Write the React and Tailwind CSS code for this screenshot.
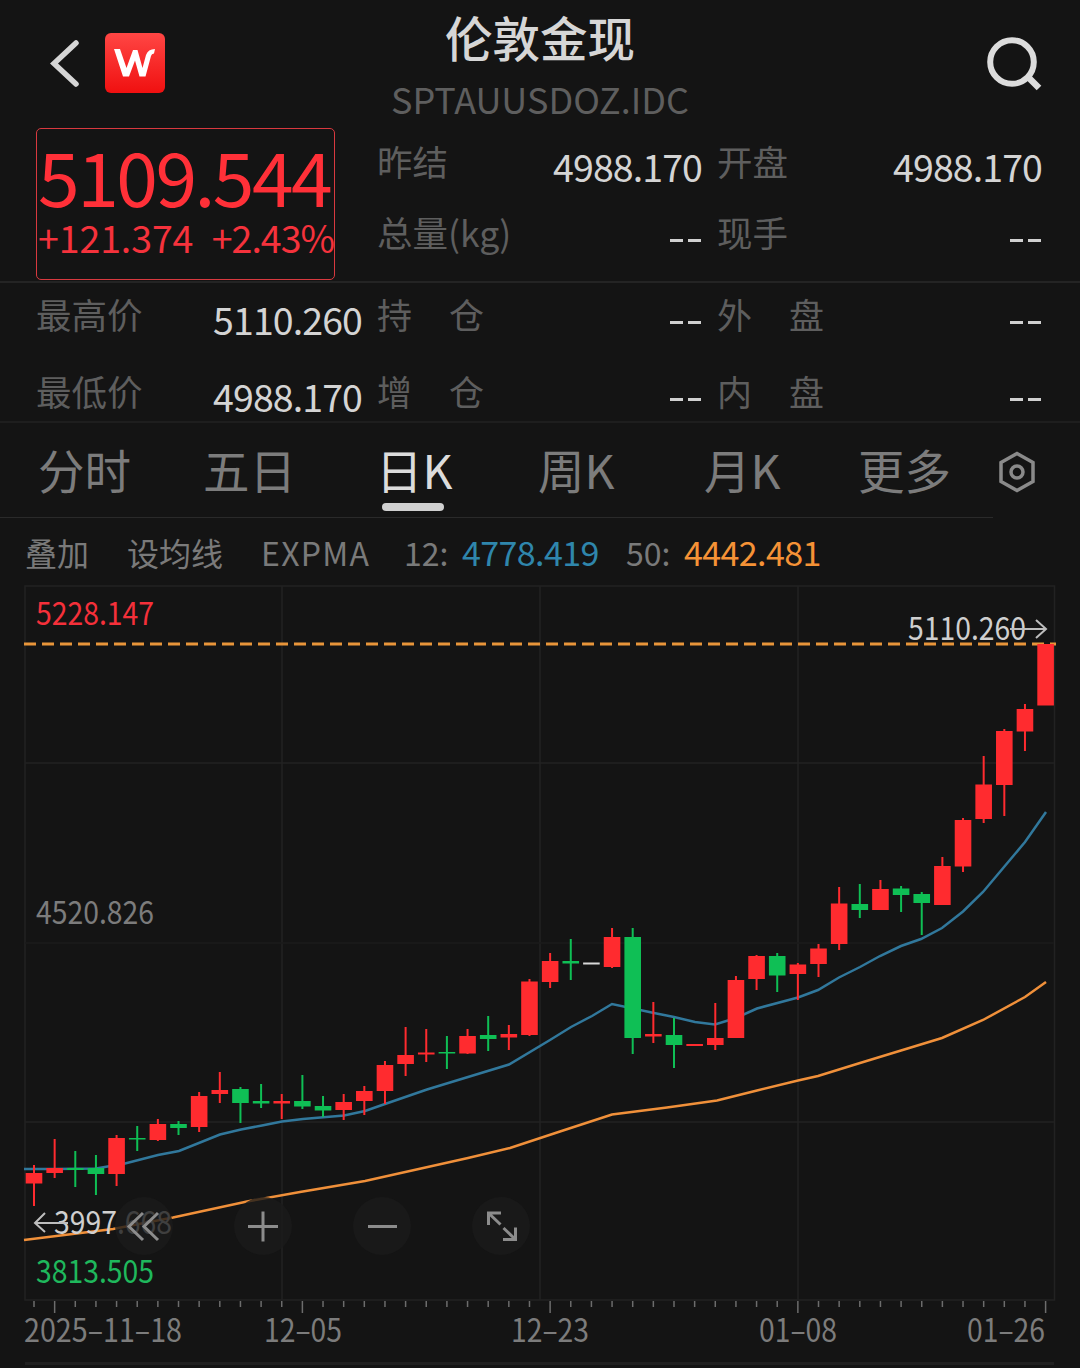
const RED = "#ff2b2f";
const GREEN = "#0fbf55";

const tabs = [
  { name: "分时", width: "w-[165px]" },
  { name: "五日", width: "w-[173px]" },
  { name: "日K", width: "w-[162px]", active: true },
  { name: "周K", width: "w-[166px]" },
  { name: "月K", width: "w-[154px]" },
  { name: "更多", width: "w-[140px]" },
];

// [open/close top, open/close bottom, high, low, direction]
const candles = [
  [1173, 1183.5, 1165, 1206, "up"],
  [1168, 1173, 1139, 1178, "up"],
  [1168, 1170, 1151, 1187, "down"],
  [1168, 1174, 1155, 1195, "down"],
  [1138, 1174, 1135, 1186, "up"],
  [1138, 1139.5, 1126, 1151, "down"],
  [1124, 1140, 1119, 1141, "up"],
  [1124, 1128, 1121, 1135, "down"],
  [1096, 1127, 1092, 1132, "up"],
  [1090, 1094, 1072, 1103, "up"],
  [1089, 1103, 1087, 1123, "down"],
  [1101, 1103.5, 1084, 1108, "down"],
  [1101, 1103.5, 1094, 1119, "up"],
  [1101, 1106.5, 1075, 1109, "down"],
  [1106, 1110.5, 1096, 1117, "down"],
  [1102, 1110, 1094, 1120, "up"],
  [1091, 1101, 1086, 1115, "up"],
  [1065, 1091, 1061, 1104, "up"],
  [1055, 1064, 1027, 1076, "up"],
  [1052.5, 1054.5, 1029, 1062, "up"],
  [1052, 1053.5, 1036, 1069, "down"],
  [1036, 1053.5, 1029, 1054, "up"],
  [1035, 1039, 1016, 1051, "down"],
  [1034, 1037.5, 1025, 1050, "up"],
  [981.5, 1035, 979, 1036, "up"],
  [961, 982, 953, 988, "up"],
  [961, 963.5, 939, 980, "down"],
  [962.5, 964.5, 963, 964, "flat"],
  [937, 967, 928, 968, "up"],
  [937, 1038, 928, 1054, "down"],
  [1034, 1036.5, 1002, 1043, "up"],
  [1035, 1045, 1018, 1068, "down"],
  [1044, 1046, 1045, 1045, "up"],
  [1038, 1045, 1003, 1050, "up"],
  [980, 1038, 976, 1038, "up"],
  [956, 979, 955, 990, "up"],
  [956, 975.5, 953, 992, "down"],
  [964.5, 974, 963, 1000, "up"],
  [948.5, 964, 944, 977, "up"],
  [903.5, 944, 887, 950, "up"],
  [904, 910, 884, 918, "down"],
  [889, 910, 880, 910, "up"],
  [888.5, 895, 886, 912, "down"],
  [894, 903, 892, 935, "down"],
  [866, 905, 857, 905, "up"],
  [820, 866.5, 818, 872, "up"],
  [784.5, 819, 756, 823, "up"],
  [731, 785, 729, 816, "up"],
  [709, 731.5, 704, 751, "up"],
  [644, 705.5, 644, 705, "up"],
];

const colors = { up: RED, down: GREEN, flat: "#d8d8d8" };

const ema12 =
  "24,1169 55,1169 96,1168.5 125,1163.5 158,1155 179,1151 220,1134.500 241,1129.500 262,1125.500 282,1121.500 303,1119 344,1115.500 365,1111 385,1104 427,1089.500 468,1077 509,1064.500 550,1040 571,1027 592,1016 612,1004 633,1008.500 654,1013 674,1017 695,1022 715,1024.500 736,1018 757,1008.500 798,997.500 818,990 839,977.500 860,967 880,956 901,946 921,939 942,928 963,911.500 983,892 1004,867 1025,842 1046,812";
const ema50 =
  "24,1240 113,1229 173,1217.500 247,1201.500 300,1192 365,1181 468,1158 510,1148 560,1131.500 612,1114.500 667,1107.500 717,1100.500 757,1090.500 798,1080.500 818,1076 860,1063 901,1050.500 942,1038 983,1020 1025,997 1046,982";

const chartLabels = [
  { x: 36, y: 625, width: 118, fill: "#f5303a", text: "5228.147" },
  { x: 36, y: 924, width: 118, fill: "#7c7c7c", text: "4520.826" },
  { x: 36, y: 1283, width: 118, fill: "#1fb85c", text: "3813.505" },
  { x: 908, y: 640, width: 118, fill: "#cfcfcf", text: "5110.260" },
  { x: 54, y: 1234, width: 118, fill: "#cfcfcf", text: "3997.668" },
  { x: 24, y: 1342, width: 158, fill: "#7c7c7c", text: "2025–11–18" },
  { x: 264, y: 1342, width: 78, fill: "#7c7c7c", text: "12–05" },
  { x: 511, y: 1342, width: 78, fill: "#7c7c7c", text: "12–23" },
  { x: 759, y: 1342, width: 78, fill: "#7c7c7c", text: "01–08" },
  { x: 967, y: 1342, width: 78, fill: "#7c7c7c", text: "01–26" },
];

const chartButtons = [
  { name: "back", d: "M28 16L14 29.5L28 43M43 16L29 29.5L43 43" },
  { name: "zoom in", d: "M14 29.5H44M29 14.5V44.5" },
  { name: "zoom out", d: "M15 29.5H44" },
  { name: "fullscreen", d: "M16.500 28V16H29M17 16.500L28.500 27.500M43.500 30.500V42.500H31M43 42L31.500 31" },
];

const candleX = (i) => 34 + i * 20.645;

const Quote = ({ label, value, spread }) => (
  <div className="flex items-center justify-between">
    <span
      className={
        spread
          ? "w-[107px] flex justify-between text-[35px] text-[#5e5e5e]"
          : "text-[35.500px] text-[#5e5e5e]"
      }
    >
      {spread ? label.split("").map((c) => <i className="not-italic" key={c}>{c}</i>) : label}
    </span>
    {value ? (
      <span className="pt-[11px] text-[37.5px] tracking-[-0.9px] text-[#d4d4d4]">{value}</span>
    ) : (
      <span className="flex gap-[5px] pt-[18px] pr-[1px]">
        <b className="h-[3px] w-[13px] bg-[#d0d0d0]" />
        <b className="h-[3px] w-[13px] bg-[#d0d0d0]" />
      </span>
    )}
  </div>
);

const Header = () => (
  <header className="flex h-[128px] justify-between pl-[50px] pr-[38px]">
    <div className="flex w-[160px] items-start gap-[25px] pt-[33px]">
      <svg className="mt-[5px] shrink-0" width="30" height="50" viewBox="0 0 30 50" fill="none">
        <path d="M26 5L4 25.500L26 46" stroke="#d6d6d6" strokeWidth="5.500" strokeLinecap="round" />
      </svg>
      <svg className="shrink-0" width="60" height="60" viewBox="0 0 60 60">
        <defs>
          <linearGradient id="logo" x1="0" y1="0" x2="0" y2="1">
            <stop offset="0" stopColor="#ff4644" />
            <stop offset="1" stopColor="#f01010" />
          </linearGradient>
        </defs>
        <rect width="60" height="60" rx="6" fill="url(#logo)" />
        {/* W mark with the flag on its right arm */}
        <path
          d="M9 16H15L21.500 35L28 17H32.500L37.500 35L41 22Q43 16 50 16L49 20.500Q46.500 20.500 46 23L40.500 43.500H34.500L30 27.500L24 43.500H18Z"
          fill="#fff"
        />
      </svg>
    </div>
    <div className="flex flex-col items-center">
      <h1 className="mt-[12px] text-[47.5px] leading-[50px] font-medium text-[#d6d6d6]">伦敦金现</h1>
      <p className="mt-[17px] text-[36px] leading-[38px] text-[#5e5e5e]">SPTAUUSDOZ.IDC</p>
    </div>
    <div className="flex w-[172px] items-start justify-end pt-[35px]">
      <svg width="56" height="56" viewBox="0 0 56 56" fill="none" stroke="#dcdcdc">
        <circle cx="26" cy="27" r="21.800" strokeWidth="6" />
        <path d="M41 41L53 53" strokeWidth="6.500" />
      </svg>
    </div>
  </header>
);

const Summary = () => (
  <section className="flex h-[153px] pl-9 pr-[38px]">
    <div className="h-[152px] w-[299px] rounded-[5px] border border-[#d8393f] text-[#ff3038]">
      <div className="mt-[8px] pl-[1px] text-[75px] leading-[76px] tracking-[-2.5px] whitespace-nowrap">5109.544</div>
      <div className="mt-[2px] flex justify-between pl-px text-[37.500px] leading-[44px] text-[#f5323c]">
        <span className="tracking-[-0.1px]">+121.374</span>
        <span className="tracking-[-1px]">+2.43%</span>
      </div>
    </div>
    <div className="-mt-[3px] ml-[42px] grid w-[665px] grid-cols-[325px_325px] grid-rows-[71px_71px] gap-x-[15px] leading-none">
      <Quote label="昨结" value="4988.170" />
      <Quote label="开盘" value="4988.170" />
      <Quote label="总量(kg)" />
      <Quote label="现手" />
    </div>
  </section>
);

const Details = () => (
  <section className="grid h-[140px] grid-cols-[326px_325px_325px] grid-rows-[61px_61px] gap-x-[15px] gap-y-4 border-t-2 border-[#242424] pl-9 leading-none">
    <Quote label="最高价" value="5110.260" />
    <Quote label="持仓" spread />
    <Quote label="外盘" spread />
    <Quote label="最低价" value="4988.170" />
    <Quote label="增仓" spread />
    <Quote label="内盘" spread />
  </section>
);

const Tabs = () => (
  <nav className="flex h-[96px] border-t-2 border-[#1e1e1e] pl-[38px] text-[46.500px] leading-[46px]">
    {tabs.map((tab) => (
      <div key={tab.name} className={tab.width}>
        <div className={tab.active ? "pt-[23px] text-[#dcdcdc]" : "pt-[23px] text-[#7c7c7c]"}>{tab.name}</div>
        {tab.active && <div className="mt-[11px] ml-[6px] h-[8px] w-[62px] rounded-full bg-[#d0d0d0]" />}
      </div>
    ))}
    <svg className="mt-[28px]" width="38" height="42" viewBox="0 0 38 42" fill="none" stroke="#8a8a8a" strokeWidth="3.500">
      <path d="M19 2.500L35 11.500V30.500L19 39.500L3 30.500V11.500Z" />
      <circle cx="19" cy="21" r="6" />
    </svg>
  </nav>
);

const Indicators = () => (
  <div className="flex h-[67px] items-center pt-px pl-[25px] text-[32px] leading-none text-[#7a7a7a]">
    <span className="w-[102px]">叠加</span>
    <span className="w-[134px]">设均线</span>
    <span className="w-[143px] tracking-[1.3px]">EXPMA</span>
    <span className="w-[58px]">12:</span>
    <span className="w-[164px] text-[34px] tracking-[-0.6px] text-[#2f86ac]">4778.419</span>
    <span className="w-[58px]">50:</span>
    <span className="text-[34px] tracking-[-0.6px] text-[#f59236]">4442.481</span>
  </div>
);

const Chart = () => (
  <div className="relative">
    <svg className="block" width="1080" height="783" viewBox="0 585 1080 783">
      <g stroke="#222222" strokeWidth="1.500" fill="none">
        <rect x="25" y="586" width="1029.500" height="714" />
        <path d="M25 763H1054M25 1122H1054M282 586V1300M540 586V1300M798 586V1300" />
        <path d="M25 943H1054" stroke="#1b1b1b" />
      </g>
      <g stroke="#6c6c6c" strokeWidth="1.500">
        {candles.map((c, i) => (
          <line key={i} x1={candleX(i)} x2={candleX(i)} y1="1301" y2={i % 12 === 1 ? 1313 : 1307} />
        ))}
      </g>
      <path d="M24 644H1056" stroke="#e8953a" strokeWidth="3" strokeDasharray="12 6" />
      <polyline points={ema12} fill="none" stroke="#31789c" strokeWidth="2.500" />
      <polyline points={ema50} fill="none" stroke="#f0903a" strokeWidth="2.500" />
      {candles.map(([top, bottom, high, low, dir], i) => (
        <g key={i} fill={colors[dir]}>
          <rect x={candleX(i) - 1} y={high} width="2" height={low - high} />
          <rect x={candleX(i) - 8.3} y={top} width="16.6" height={bottom - top} />
        </g>
      ))}
      {chartLabels.map((l) => (
        <text key={l.text + l.y} x={l.x} y={l.y} fill={l.fill} fontSize="32" textLength={l.width} lengthAdjust="spacingAndGlyphs">
          {l.text}
        </text>
      ))}
      <g stroke="#bdbdbd" strokeWidth="2" fill="none">
        <path d="M1010 629H1046M1036 620L1046 629L1036 638" />
        <path d="M68 1223H35M45 1213L35 1223L45 1232" />
      </g>
      <path d="M25 1363.500H1054" stroke="#202020" strokeWidth="3" />
    </svg>
    <div className="absolute top-[612px] left-[115px] flex gap-[61px]">
      {chartButtons.map((b) => (
        <button key={b.name} aria-label={b.name} className="h-[58px] w-[58px] rounded-full bg-[#1a1a1a]/80">
          <svg width="58" height="58" viewBox="0 0 58 58" fill="none" stroke="#8c8c8c" strokeWidth="3">
            <path d={b.d} />
          </svg>
        </button>
      ))}
    </div>
  </div>
);

export default function App() {
  return (
    <div className="h-[1368px] w-[1080px] overflow-hidden bg-[#141414] font-['Noto_Sans_CJK_SC',sans-serif]">
      <Header />
      <Summary />
      <Details />
      <Tabs />
      <div className="h-px w-[993px] bg-[#2a2a2a]" />
      <Indicators />
      <Chart />
    </div>
  );
}
